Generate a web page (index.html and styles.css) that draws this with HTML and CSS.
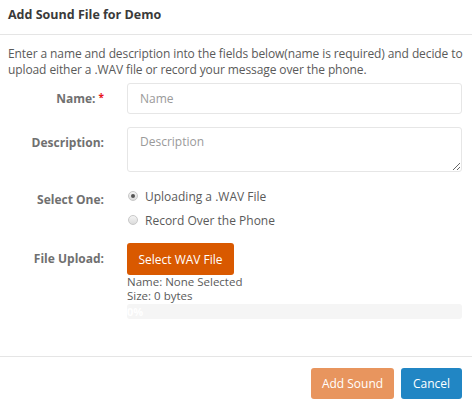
FILE: index.html
```html
<!DOCTYPE html>
<html>
<head>
<meta charset="utf-8">
<link rel="stylesheet" href="styles.css">
</head>
<body>
<div class="modal">
  <div class="modal-header">Add Sound File for Demo</div>
  <div class="modal-body">
    <p class="intro">Enter a name and description into the fields below(name is required) and decide to<br>upload either a .WAV file or record your message over the phone.</p>
    <div class="form">
      <div class="row row-name">
        <label class="lbl">Name: <span class="req">*</span></label>
        <div class="field"><input class="input" placeholder="Name"></div>
      </div>
      <div class="row row-desc">
        <label class="lbl">Description:</label>
        <div class="field"><textarea class="textarea" placeholder="Description"></textarea></div>
      </div>
      <div class="row row-select">
        <label class="lbl">Select One:</label>
        <div class="field radios">
          <label class="radio"><span class="dot checked"></span>Uploading a .WAV File</label>
          <label class="radio"><span class="dot"></span>Record Over the Phone</label>
        </div>
      </div>
      <div class="row row-file">
        <label class="lbl">File Upload:</label>
        <div class="field">
          <button class="btn btn-orange">Select WAV File</button>
          <div class="meta">Name: None Selected</div>
          <div class="meta">Size: 0 bytes</div>
          <div class="progress"><span class="pct">0%</span></div>
        </div>
      </div>
    </div>
  </div>
  <div class="modal-footer">
    <button class="btn btn-add">Add Sound</button>
    <button class="btn btn-blue">Cancel</button>
  </div>
</div>
</body>
</html>
```
FILE: styles.css
```css
* { box-sizing: border-box; }
html, body { margin: 0; padding: 0; background: #fff; }
body {
  font-family: "Open Sans", "DejaVu Sans", sans-serif;
  font-size: 12px;
  color: #5a5a5a;
}
.modal { width: 472px; }
.modal-header {
  height: 35px;
  padding: 6px 8px 0;
  font-weight: bold;
  font-size: 12.5px;
  color: #3a3a3a;
  border-bottom: 1px solid #e5e5e5;
}
.modal-body { padding: 11px 10px 0 8px; }
.intro {
  margin: 0;
  line-height: 16px;
  letter-spacing: -0.1px;
  white-space: nowrap;
  color: #5a5a5a;
}
.form { margin-top: 5px; }
.row {
  display: grid;
  grid-template-columns: 96px 1fr;
  column-gap: 23px;
}
.lbl {
  text-align: right;
  font-weight: bold;
  color: #707070;
}
.req { color: #e8141e; font-size: 10px; vertical-align: 2px; }
.row-name { height: 44px; }
.row-name .lbl { padding-top: 7px; }
.input {
  display: block;
  width: 100%;
  height: 31px;
  border: 1px solid #e6e6e6;
  border-radius: 3px;
  padding: 0 12px;
  font: inherit;
  color: #555;
}
.textarea {
  display: block;
  width: 100%;
  height: 45px;
  border: 1px solid #e6e6e6;
  border-radius: 3px;
  padding: 5px 12px;
  font: inherit;
  color: #555;
}
::placeholder { color: #9a9a9a; }
.row-desc { height: 60px; }
.row-desc .lbl { padding-top: 7px; }
.row-select { height: 56px; }
.row-select .lbl { padding-top: 4px; }
.radios { display: flex; flex-direction: column; gap: 6px; }
.radio { display: flex; align-items: center; height: 18px; color: #5a5a5a; }
.dot {
  width: 10px; height: 10px;
  border-radius: 50%;
  border: 1px solid #c8c8c8;
  background: linear-gradient(#f4f4f4, #dcdcdc);
  margin: 0 7px 0 1px;
  position: relative;
}
.dot.checked::after {
  content: "";
  position: absolute;
  left: 2px; top: 2px;
  width: 4px; height: 4px;
  border-radius: 50%;
  background: #555;
}
.row-file .lbl { padding-top: 7px; }
.btn {
  border: none;
  border-radius: 3px;
  font: inherit;
  color: #fff;
  padding: 0;
}
.btn-orange {
  background: #d95900;
  width: 107px;
  height: 32px;
  display: block;
}
.meta { height: 14px; line-height: 14px; font-size: 11.5px; color: #5a5a5a; }
.progress {
  height: 15px;
  background: #f5f5f5;
  border-radius: 3px;
  margin-top: 1px;
  font-weight: bold;
  color: #fff;
  font-size: 11px;
  line-height: 15px;
}
.modal-footer {
  margin-top: 37px;
  border-top: 1px solid #e5e5e5;
  padding: 11px 10px 0;
  display: flex;
  justify-content: flex-end;
  gap: 7px;
}
.btn-add { background: #e8955e; width: 83px; height: 31px; }
.btn-blue { background: #2186c4; width: 61px; height: 31px; }
```
